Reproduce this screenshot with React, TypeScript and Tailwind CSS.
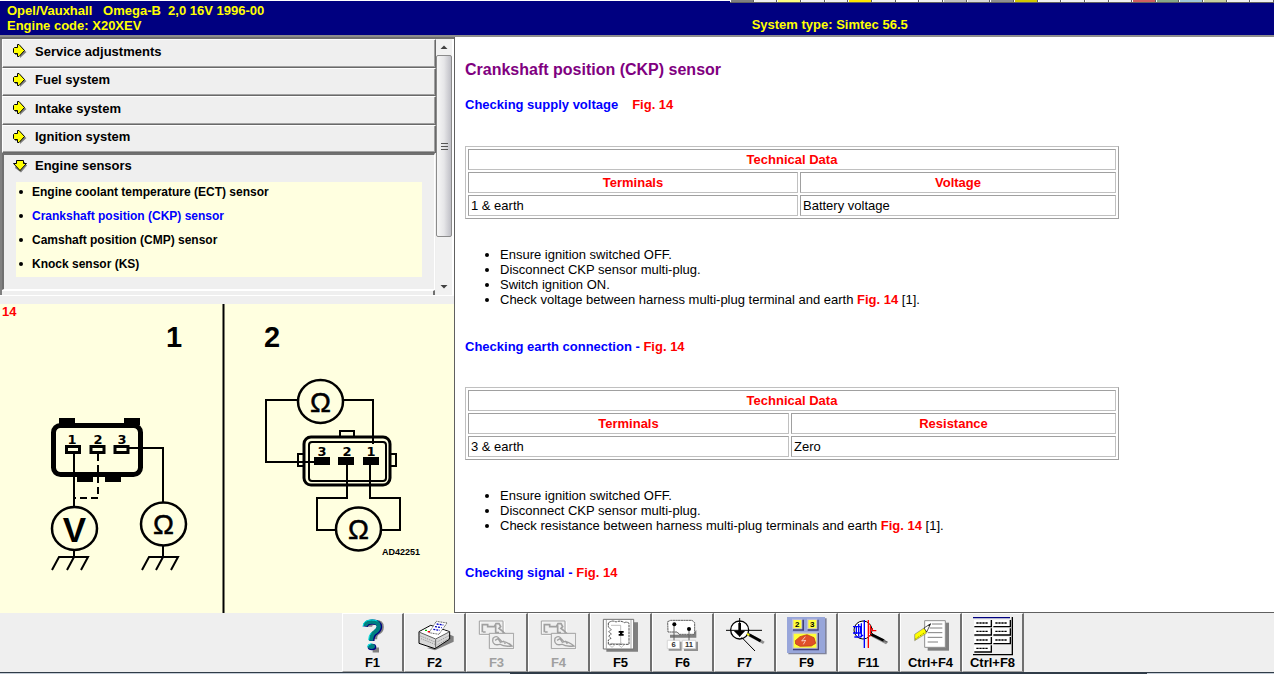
import type { ReactNode } from "react";
import clsx from "clsx";

const SECTIONS = ["Service adjustments", "Fuel system", "Intake system", "Ignition system"];

const SENSORS = [
  "Engine coolant temperature (ECT) sensor",
  "Crankshaft position (CKP) sensor",
  "Camshaft position (CMP) sensor",
  "Knock sensor (KS)",
];

const ACTIVE_SENSOR = "Crankshaft position (CKP) sensor";

// Toolbar buttons of the window behind, only their lower edge shows
const SLIVERS = [
  "bg-[#808080]", "bg-[#f0f0f0]", "bg-[#ffff80]", "bg-[#f0f0f0]", "bg-[#f0f0f0]", "bg-[#ffe600]",
  "bg-[#f0f0f0]", "bg-white", "bg-[#f0f0f0]", "bg-[#c0c0c0]", "bg-[#d8d8d8]", "bg-[#909090]",
  "bg-[#d0c800]", "bg-[#f0f0f0]", "bg-[#f0f0f0]", "bg-[#f0f0f0]", "bg-[#f0f0f0]", "bg-[#d06060]",
  "bg-[#88a888]", "bg-[#a0c8d8]", "bg-[#c8d0a0]", "bg-[#f0f0f0]", "bg-[#f0f0f0]",
];

function Header() {
  return (
    <header className="relative flex h-[37px] shrink-0 border-t border-b-2 border-t-white border-b-[#8c8c8c] bg-[#000080] text-[13px] leading-[15px] font-bold whitespace-pre text-[#ffff00]">
      <div className="basis-[59%] pt-0.5 pl-[7px]">
        <p>{"Opel/Vauxhall   Omega-B  2,0 16V 1996-00"}</p>
        <p>Engine code: X20XEV</p>
      </div>
      <p className="pt-4">System type: Simtec 56.5</p>
      <div className="absolute -top-px right-0 flex h-[3px] w-[544px] border-b border-[#606060] bg-[#606060]">
        {SLIVERS.map((tone, i) => (
          <span key={i} className={clsx("mr-px flex-1 border-l border-white", tone)} />
        ))}
      </div>
    </header>
  );
}

function ArrowIcon({ open = false }: { open?: boolean }) {
  return (
    <svg viewBox="0 0 14 14" className="h-3.5 w-3.5 shrink-0" aria-hidden="true">
      {open ? (
        <>
          <path d="M4 3h8v3h2.500L8 13.500 2 9z" fill="#808080" />
          <path d="M3.500 1.500h7v3h3L7 11.500.5 4.500h3z" fill="#ffff00" stroke="#000" />
        </>
      ) : (
        <>
          <path d="M2 4h4V2l7.500 6L7 14v-3H2z" fill="#808080" />
          <path d="M1.500 3.500h3v-3H6l5.500 6-5.500 6H4.500v-3h-3l-1-1v-4z" fill="#ffff00" stroke="#000" />
        </>
      )}
    </svg>
  );
}

function ScrollBar() {
  return (
    <div className="flex w-4 shrink-0 flex-col bg-[#f1f1f1]">
      <button aria-label="Scroll up" className="flex h-4 shrink-0 items-center justify-center">
        <svg viewBox="0 0 8 4" className="h-1 w-2">
          <path d="M0.500 4l3.500-3.500 3.500 3.500z" fill="#404040" />
        </svg>
      </button>
      <div className="flex h-[182px] flex-col items-center justify-center gap-0.5 rounded-xs border border-[#8b8b8b] bg-linear-to-r from-[#f6f6f6] via-[#e6e6e8] to-[#bfbfc6]">
        <span className="h-px w-[7px] bg-[#555]" />
        <span className="h-px w-[7px] bg-[#555]" />
        <span className="h-px w-[7px] bg-[#555]" />
      </div>
      <button aria-label="Scroll down" className="mt-auto flex h-4 shrink-0 items-center justify-center">
        <svg viewBox="0 0 8 4" className="h-1 w-2">
          <path d="M0.500 0l3.500 3.500 3.500-3.500z" fill="#404040" />
        </svg>
      </button>
    </div>
  );
}

function SystemNav() {
  return (
    <div className="flex h-[259px] shrink-0 border-t-2 border-b border-t-[#707070] border-b-white">
      <nav className="flex flex-1 flex-col overflow-hidden border-l-2 border-[#808080]">
        <div className="grid h-[114px] shrink-0 grid-rows-4">
          {SECTIONS.map((name) => (
            <button
              key={name}
              className="flex items-center gap-2 border-t border-r border-b border-l border-t-white border-r-[#696969] border-b-[#696969] border-l-white bg-[#efefef] pb-1 pl-2.5 text-left text-[13px] font-bold shadow-[inset_-1px_-1px_0_#a0a0a0]"
            >
              <ArrowIcon />
              {name}
            </button>
          ))}
        </div>
        <section className="mr-px h-[137px] shrink-0 border-t-2 border-r border-b border-l-2 border-t-[#707070] border-r-white border-b-white border-l-[#707070] bg-[#efefef]">
          <button className="flex h-[22px] items-center gap-2 pl-[9px] text-[13px] font-bold">
            <ArrowIcon open />
            Engine sensors
          </button>
          <ul className="mt-[5px] mr-3 ml-3 h-[95px] bg-[#ffffe0] text-[12px] leading-[20px] font-bold">
            {SENSORS.map((name) => (
              <li key={name} className="flex h-6 items-center gap-[9px] pb-1 pl-[3px]">
                <span className="h-1 w-1 rounded-full bg-black" />
                <a href="#" className={name === ACTIVE_SENSOR ? "text-[#0000ff]" : "text-black"}>
                  {name}
                </a>
              </li>
            ))}
          </ul>
        </section>
        <div className="mr-px h-3 shrink-0 border-t border-r-2 border-white border-r-[#707070]" />
      </nav>
      <ScrollBar />
      <span className="w-0.5 bg-white" />
    </div>
  );
}

function Meter({ cx, cy, children }: { cx: number; cy: number; children?: ReactNode }) {
  return (
    <>
      <ellipse cx={cx} cy={cy} rx="22.500" ry="21.500" fill="#ffffe0" stroke="#000" strokeWidth="2.500" />
      {children ?? (
        <text x={cx} y={cy + 10} fontSize="28" textAnchor="middle" stroke="#000" strokeWidth="0.500">
          Ω
        </text>
      )}
    </>
  );
}

function WiringFigure() {
  return (
    <svg
      viewBox="0 304 454 309"
      preserveAspectRatio="xMinYMin meet"
      className="min-h-0 w-full flex-1 bg-[#ffffe0] font-['Liberation_Sans',sans-serif]"
      role="img"
      aria-label="Figure 14"
    >
      <text x="2" y="316" fontSize="13" fontWeight="bold" fill="#ff0000">14</text>
      <path d="M223.500 304v309" stroke="#000" strokeWidth="2" />
      <g fontSize="29" fontWeight="bold" textAnchor="middle">
        <text x="174" y="347">1</text>
        <text x="272" y="347">2</text>
      </g>

      {/* Harness side plug */}
      <rect x="53.500" y="425.500" width="87" height="49" rx="7" fill="none" stroke="#000" strokeWidth="5" />
      <path d="M59 418h16v7H59zM124 418h16v7h-16zM77 475h16v7H77zM105 475h16v7h-16z" />
      <g fontFamily="DejaVu Sans" fontSize="13" fontWeight="bold" textAnchor="middle">
        <text x="72" y="444">1</text>
        <text x="98" y="444">2</text>
        <text x="122" y="444">3</text>
        <text x="322" y="456">3</text>
        <text x="347" y="456">2</text>
        <text x="371" y="456">1</text>
      </g>
      <g fill="none" stroke="#000" strokeWidth="2">
        <path d="M66.500 446.500h13v6h-13zM91 446.500h13v6H91zM115 446.500h13v6h-13z" strokeWidth="3" />
        <path d="M74 454v53M129 448h34v54M74 550v7M163 546v11" />
        <path d="M98 454v44H74" strokeDasharray="7 4" />
        <path d="M52 570l7-13h29l-7 13M67 570l7-13M142 570l7-13h29l-7 13M156 570l7-13" />
      </g>
      <Meter cx={74.5} cy={528.5}>
        <text x="74.500" y="542" fontSize="35" fontWeight="bold" textAnchor="middle">
          V
        </text>
      </Meter>
      <Meter cx={163.5} cy={524} />

      {/* Sensor side plug */}
      <g fill="none" stroke="#000">
        <rect x="304" y="437" width="86" height="48" rx="7" strokeWidth="3" />
        <rect x="309" y="442" width="77" height="39" rx="3" strokeWidth="2" />
        <path d="M340 436v-5h14v5M303 454h-5v12h5M391 454h5v12h-5" strokeWidth="2" />
        <path
          d="M298 400h-32v62h50M344 400h29v44M347 465v33h-30v32h18M370 465v33h30v32h-18"
          strokeWidth="2"
        />
      </g>
      <path d="M314 457h16v8h-16zM338 457h16v8h-16zM363 457h16v8h-16z" />
      <Meter cx={320.5} cy={401.5} />
      <Meter cx={358.5} cy={529} />
      <text x="382" y="555" fontSize="9" fontWeight="bold">AD42251</text>
    </svg>
  );
}

function DataTable({ unit, terminal, value, split }: { unit: string; terminal: string; value: string; split: string }) {
  const cell = "h-[21px] border border-t-[#a0a0a0] border-r-[#c0c0c0] border-b-[#c0c0c0] border-l-[#a0a0a0] px-0.5 py-0";
  return (
    <table className="w-full max-w-[654px] table-fixed border-separate border-spacing-[2px] border border-t-[#c0c0c0] border-r-[#a0a0a0] border-b-[#a0a0a0] border-l-[#c0c0c0] leading-[15px]">
      <colgroup>
        <col className={split} />
        <col />
      </colgroup>
      <thead className="text-[#ff0000]">
        <tr>
          <th colSpan={2} className={cell}>Technical Data</th>
        </tr>
        <tr>
          <th className={cell}>Terminals</th>
          <th className={cell}>{unit}</th>
        </tr>
      </thead>
      <tbody>
        <tr>
          <td className={cell}>{terminal}</td>
          <td className={cell}>{value}</td>
        </tr>
      </tbody>
    </table>
  );
}

function FigLink() {
  return <a href="#" className="font-bold text-[#ff0000]">Fig. 14</a>;
}

function Procedure() {
  return (
    <main className="min-h-0 flex-1 overflow-hidden border-b border-l border-[#606060] bg-white pt-[23px] pl-[10px] text-[13px] leading-[15px]">
      <h1 className="text-base leading-5 font-bold text-[#800080]">Crankshaft position (CKP) sensor</h1>
      <h2 className="mt-[17px] mb-[34px] flex gap-3.5 font-bold text-[#0000ff]">
        Checking supply voltage
        <FigLink />
      </h2>
      <DataTable unit="Voltage" terminal="1 & earth" value="Battery voltage" split="w-[330px]" />
      <ul className="mt-7 ml-[35px] list-disc">
        <li>Ensure ignition switched OFF.</li>
        <li>Disconnect CKP sensor multi-plug.</li>
        <li>Switch ignition ON.</li>
        <li>Check voltage between harness multi-plug terminal and earth <FigLink /> [1].</li>
      </ul>
      <h2 className="mt-8 mb-[33px] font-bold text-[#0000ff]">
        Checking earth connection - <FigLink />
      </h2>
      <DataTable unit="Resistance" terminal="3 & earth" value="Zero" split="w-[321px]" />
      <ul className="mt-7 ml-[35px] list-disc">
        <li>Ensure ignition switched OFF.</li>
        <li>Disconnect CKP sensor multi-plug.</li>
        <li>Check resistance between harness multi-plug terminals and earth <FigLink /> [1].</li>
      </ul>
      <h2 className="mt-8 font-bold text-[#0000ff]">
        Checking signal - <FigLink />
      </h2>
    </main>
  );
}

/* Toolbar drawings, three units to the pixel */

const HELP = (
  <>
    <path d="M86 56q0-13 17-13 18 0 18 14 0 12-12 17-8 4-8 20M95 126h19" fill="none" stroke="#808080" strokeWidth="15" />
    <path d="M73 56q2-14 21-14 22 0 22 15 0 9-12 17-11 7-11 25" fill="none" stroke="#000080" strokeWidth="15" />
    <path d="M72 54q2-13 21-13 20 0 20 14 0 9-11 17-12 7-12 26" fill="none" stroke="#008080" strokeWidth="13" />
    <path d="M66 56q1-20 25-20 12 0 18 3M83 96q0-14 8-22" fill="none" stroke="#00e0e0" strokeWidth="3" />
    <ellipse cx="93" cy="117" rx="13" ry="10" fill="#000080" />
    <ellipse cx="91" cy="115" rx="11" ry="8" fill="#008080" />
    <path d="M80 116q1-8 11-9" fill="none" stroke="#00ffff" strokeWidth="3" />
  </>
);

const PRINTER = (
  <>
    <path d="M258 120l24 7 56-26v-16l-14-6-20 30z" fill="#808080" />
    <path d="M234 71l35-19 57 19v22l-44 29-48-16z" fill="#d8d8d8" stroke="#000" strokeWidth="3" />
    <path d="M236 72l34-18 54 18-40 22z" fill="#fff" />
    <path d="M234 72l50 21 42-22M284 94v27" fill="none" stroke="#606060" strokeWidth="3" />
    <path d="M236 83l46 19M240 92l42 17M290 101l34-18M290 110l34-19" stroke="#909090" strokeWidth="3" strokeDasharray="3 3" />
    <path d="M264 74l22-34 32 5-24 34z" fill="#fff" stroke="#000" strokeWidth="2" strokeDasharray="3 2" />
    <path d="M287 48l20 3M282 56l20 3M277 64l19 3" stroke="#0000c0" strokeWidth="4" strokeDasharray="6 3" />
    <path d="M252 67h6" stroke="#00c000" strokeWidth="4" />
    <path d="M260 71h7" stroke="#ff0000" strokeWidth="4" />
  </>
);

const PICTURES = (
  <>
    <path d="M417 41h73v40h-73zM447 78h73v46h-73z" fill="none" stroke="#fff" strokeWidth="3" />
    <g fill="none" stroke="#a0a0a0" strokeWidth="3">
      <path d="M415 39h71v39M415 39v40h29" />
      <path d="M424 73V50h16v6h20l5-9h9l5 9-5 5 12 10 15 17M464 52v22h10M426 72h8" strokeWidth="5" />
      <path d="M445 76h73v46h-73z" fill="#efefef" />
      <path d="M456 91q10-10 18 0l8 9q15 0 31 14-25 3-36-5-20 5-22-10zM462 97l9-5 7 11 10-3 5 8" strokeWidth="4" />
    </g>
  </>
);

const SHEET = (
  <>
    <path d="M153 43h18v88H76v-8h77z" fill="#808080" />
    <path d="M67 34h91v89H67z" fill="#fff" stroke="#707070" strokeWidth="3" />
    <path d="M76 34v88M150 34v88" stroke="#808080" strokeWidth="2" />
    <path d="M82 45q12-10 23-3 13-6 25 2 8-4 14 2v63H82v-13l8-5-7-7 8-6-8-7 8-6-9-8z" fill="none" stroke="#505050" strokeWidth="3" strokeDasharray="8 2" />
    <path d="M90 52h29v55H90M84 110q9-9 18 0l-9 8zM112 110q9-9 18 0l-9 8z" fill="none" stroke="#a0a0a0" strokeWidth="2" />
    <path d="M113 69h15v5h-4v4h4v5h-15v-5h4v-4h-4z" />
  </>
);

const PLUG = (
  <>
    <path d="M267 80h67l12-14v23H267z" fill="#808080" />
    <path d="M260 41l9-4h64l8 7v35h-47l-5-7h-28z" fill="#fff" stroke="#606060" strokeWidth="3" strokeDasharray="7 1" />
    <path d="M263 101h39v27h-39zM309 101h42v28h-42z" fill="#909090" />
    <path d="M259 97h37v25h-37zM304 97h40v25h-40z" fill="#fff" stroke="#c8c8c8" strokeWidth="2" />
    <path d="M279 49v48M324 63v34" stroke="#606060" strokeWidth="3" />
    <circle cx="280" cy="49" r="6" />
    <circle cx="324" cy="63" r="6" />
    <g fontSize="23" fontWeight="bold" textAnchor="middle" fill="#303030">
      <text x="278" y="118">6</text>
      <text x="324" y="118">11</text>
    </g>
  </>
);

const LOCATE = (
  <>
    <path d="M508 77l43 24-5 7-44-23z" fill="#909090" />
    <circle cx="476" cy="66" r="27" fill="#fff" stroke="#000" strokeWidth="4" />
    <path d="M435 67h108M476 30v56M482 88l40 41" stroke="#000" strokeWidth="3" />
    <path d="M472 45h8v23h13l-17 18-18-18h14z" />
    <path d="M503 79l36 20" stroke="#000" strokeWidth="8" />
    <path d="M498 77l7 5" stroke="#ffff00" strokeWidth="5" />
  </>
);

const ENGINE = (
  <>
    <path d="M-38 31H77v108H-38z" fill="#80849c" />
    <path d="M-42 27H72v108H-42z" fill="#98a6da" />
    <path d="M-24 35H9v33h-33zM20 35h33v33H20zM-24 75h78v52h-78z" fill="#404078" />
    <path d="M-27 32H4v32h-31zM18 32h31v32H18zM-26 73h76v49h-76z" fill="#c0c0d8" />
    <path d="M-23 36H1v25h-24zM22 36h24v25H22zM-22 77h68v42h-68z" fill="#ffff38" />
    <path d="M-17 98l14-12 21-6 21 9 5 17-13 8-34 1-13-7z" fill="#e05028" stroke="#b03010" strokeWidth="2" />
    <path d="M13 86L2 99l12-2-7 12" fill="none" stroke="#fff" strokeWidth="2" />
    <g fontSize="24" fontWeight="bold" textAnchor="middle">
      <text x="-11" y="57">2</text>
      <text x="34" y="57">3</text>
    </g>
  </>
);

const SIGNAL = (
  <>
    <path d="M216 77l45 25-6 7-43-23z" fill="#909090" />
    <circle cx="186" cy="66" r="27" fill="#fff" stroke="#000" strokeWidth="3" />
    <path d="M190 36v84M156 56h23v19h-23M166 57v21M173 48v36M160 87h18l8-6M181 46v42" fill="none" stroke="#0000ff" strokeWidth="4" />
    <path d="M202 36v84M208 52v26M214 60v8h12M214 75v8h-9" fill="none" stroke="#ff0000" strokeWidth="4" />
    <path d="M211 79l38 19" stroke="#000" strokeWidth="8" />
    <path d="M247 97l12 5" stroke="#606060" strokeWidth="4" />
  </>
);

const NOTES = (
  <>
    <path d="M380 44h64v84h-64z" fill="#808080" />
    <path d="M371 38h62v80h-62z" fill="#fff" stroke="#909090" strokeWidth="3" />
    <path d="M393 48h31M386 60h38M380 74h44M380 88h44M380 102h31" stroke="#808080" strokeWidth="3" />
    <path d="M341 79l28-19 8 4-1 12-35 22z" fill="#ffff00" stroke="#808080" strokeWidth="2" />
    <path d="M369 60l20-13-12 25z" fill="#fff" stroke="#000" strokeWidth="2" />
    <path d="M389 47l-8 5 4 3z" />
    <path d="M342 94l33-23" stroke="#808000" strokeWidth="3" strokeDasharray="3 3" />
  </>
);

const KEYS = (
  <>
    <path d="M516 29h111" stroke="#000080" strokeWidth="4" />
    <path d="M516 140h118V27" fill="none" stroke="#000" strokeWidth="4" />
    {[36, 61, 87, 112].map((y) => (
      <g key={y}>
        <path d={y === 112 ? `M519 ${y}h53v21h-53z` : `M519 ${y}h53v21h-53zM576 ${y}h53v21h-53z`} fill="#fff" />
        <path
          d={y === 112 ? `M520 ${y + 20}h51v-20` : `M520 ${y + 20}h51v-20M577 ${y + 20}h51v-20`}
          fill="none"
          stroke="#000"
          strokeWidth="4"
        />
        <path d={y === 112 ? `M526 ${y + 9}h34` : `M526 ${y + 9}h34M583 ${y + 9}h34`} stroke="#000" strokeWidth="4" strokeDasharray="7 2" />
      </g>
    ))}
  </>
);

const TOOLS: { label: string; box: string; icon: ReactNode; disabled?: boolean }[] = [
  { label: "F1", box: "36 27 120 120", icon: HELP },
  { label: "F2", box: "222 27 120 120", icon: PRINTER },
  { label: "F3", box: "408 27 120 120", icon: PICTURES, disabled: true },
  { label: "F4", box: "408 27 120 120", icon: PICTURES, disabled: true },
  { label: "F5", box: "60 27 120 120", icon: SHEET },
  { label: "F6", box: "246 27 120 120", icon: PLUG },
  { label: "F7", box: "432 27 120 120", icon: LOCATE },
  { label: "F9", box: "-42 27 120 120", icon: ENGINE },
  { label: "F11", box: "144 27 120 120", icon: SIGNAL },
  { label: "Ctrl+F4", box: "330 27 120 120", icon: NOTES },
  { label: "Ctrl+F8", box: "516 27 120 120", icon: KEYS },
];

function Toolbar() {
  return (
    <footer className="flex h-[60px] shrink-0 border-b border-[#303c48] bg-[#efefef] pl-[342px]">
      {TOOLS.map(({ label, box, icon, disabled }) => (
        <button
          key={label}
          disabled={disabled}
          className={clsx(
            "flex w-[62px] flex-col items-center border-t border-r-2 border-b border-l border-t-white border-r-[#707070] border-b-[#a0a0a0] border-l-white pt-[3px] text-[13px] leading-[11px] font-bold",
            disabled ? "text-[#a0a0a0]" : "text-black",
          )}
        >
          <svg viewBox={box} className="h-10 w-10 shrink-0" aria-hidden="true">
            {icon}
          </svg>
          {label}
        </button>
      ))}
    </footer>
  );
}

export default function App() {
  return (
    <div className="flex h-screen flex-col overflow-hidden bg-[#efefef] font-['Liberation_Sans',Arial,sans-serif] text-black">
      <Header />
      <div className="flex min-h-0 flex-1">
        <aside className="flex w-[454px] shrink-0 flex-col">
          <SystemNav />
          <div className="h-2 shrink-0" />
          <WiringFigure />
        </aside>
        <Procedure />
      </div>
      <Toolbar />
      {/* Edge of the taskbar below */}
      <div className="flex h-px shrink-0">
        <span className="basis-2/5 bg-[#c4ccd6]" />
        <span className="basis-1/2 bg-[#303c48]" />
        <span className="flex-1 bg-[#c4ccd6]" />
      </div>
    </div>
  );
}
